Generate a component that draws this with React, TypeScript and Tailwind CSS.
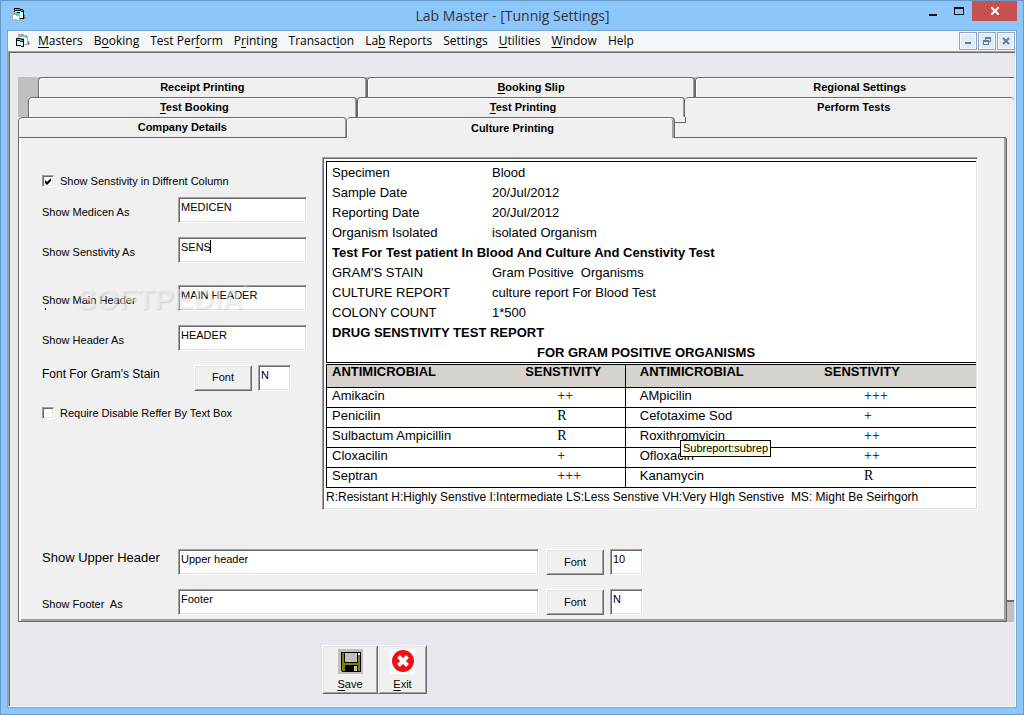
import React, { useState } from 'react';

const SUNKEN = 'border border-t-[#a0a0a0] border-l-[#a0a0a0] border-r-white border-b-white shadow-[inset_1px_1px_0_#696969,inset_-1px_-1px_0_#e3e3e3]';
const RAISED = 'border border-t-white border-l-white border-r-[#696969] border-b-[#696969] shadow-[inset_1px_1px_0_#e3e3e3,inset_-1px_-1px_0_#a0a0a0]';

interface MenuEntry {
    text: string;
    key: number;
}

const menus: MenuEntry[] = [
    { text: 'Masters', key: 0 },
    { text: 'Booking', key: 1 },
    { text: 'Test Perform', key: 8 },
    { text: 'Printing', key: 1 },
    { text: 'Transaction', key: 8 },
    { text: 'Lab Reports', key: 2 },
    { text: 'Settings', key: -1 },
    { text: 'Utilities', key: 0 },
    { text: 'Window', key: 0 },
    { text: 'Help', key: -1 },
];

const reportLines: [string, string][] = [
    ['Specimen', 'Blood'],
    ['Sample Date', '20/Jul/2012'],
    ['Reporting Date', '20/Jul/2012'],
    ['Organism Isolated', 'isolated Organism'],
];

const cultureLines: [string, string][] = [
    ["GRAM'S STAIN", 'Gram Positive  Organisms'],
    ['CULTURE REPORT', 'culture report For Blood Test'],
    ['COLONY COUNT', '1*500'],
];

const drugs = [
    ['Amikacin', '++', 'AMpicilin', '+++'],
    ['Penicilin', 'R', 'Cefotaxime Sod', '+'],
    ['Sulbactum Ampicillin', 'R', 'Roxithromyicin', '++'],
    ['Cloxacilin', '+', 'Ofloxacin', '++'],
    ['Septran', '+++', 'Kanamycin', 'R'],
];

// Label with its access key underlined
const Mnemonic: React.FC<{ text: string; at: number }> = ({ text, at }) => {
    if (at < 0) return <>{text}</>;
    return (
        <span>
            {text.slice(0, at)}
            <span className="underline underline-offset-2">{text[at]}</span>
            {text.slice(at + 1)}
        </span>
    );
};

const FormsIcon: React.FC<{ back: string; front: string }> = ({ back, front }) => (
    <svg width="15" height="14" viewBox="0 0 15 14" shapeRendering="crispEdges" aria-hidden="true">
        <path d="M12 7h1v2h1v1h-1v1h-2v-3h1z" fill="#808080" />
        <path d="M2 0h6v1h3v1h1v9h-4v-6h-6z" fill={back} />
        <path d="M3 1h5v1h3v1h-2v-1h-6z" fill="#00e5e5" />
        <path d="M3 3h6v1h2v6h-3v-6h-5z" fill="#fff" />
        <path d="M0 4h5v1h3v8h-3v-1h-5z" fill={front} />
        <path d="M1 5h4v1h2v1h-3v-1h-3z" fill="#00e5e5" />
        <path d="M1 7h3v1h3v4h-2v-1h-4z" fill="#fff" />
    </svg>
);

interface TabProps {
    text: string;
    at?: number;
    className?: string;
}

const Tab: React.FC<TabProps> = ({ text, at = -1, className = '' }) => (
    <button
        type="button"
        className={`h-5 w-[33%] shrink-0 rounded-t-[4px] border-t border-l border-r border-[#696969] bg-[#f0f0f0] pb-[2px] text-center text-[11px] leading-[16px] font-bold shadow-[inset_1px_1px_0_#fff,inset_-1px_0_0_#a0a0a0] ${className}`}
    >
        <Mnemonic text={text} at={at} />
    </button>
);

interface TextFieldProps {
    id: string;
    value: string;
    onChange: (id: string, value: string) => void;
    label?: string;
    className: string;
}

const TextField: React.FC<TextFieldProps> = ({ id, value, onChange, label, className }) => (
    <input
        id={id}
        type="text"
        aria-label={label}
        value={value}
        onChange={e => onChange(id, e.target.value)}
        className={`h-[26px] shrink-0 bg-white pr-1 pb-[6px] pl-[2px] text-[11px] outline-none ${SUNKEN} ${className}`}
    />
);

const FontButton: React.FC = () => (
    <button type="button" className={`h-[26px] w-[58px] shrink-0 bg-[#f0f0f0] text-[11px] ${RAISED}`}>Font</button>
);

const CheckBox: React.FC<{ label: string; initial: boolean }> = ({ label, initial }) => {
    const [checked, setChecked] = useState(initial);
    return (
        <label className="flex items-center gap-[6px]">
            <span className="grid">
                <input
                    type="checkbox"
                    checked={checked}
                    onChange={() => setChecked(!checked)}
                    className={`col-start-1 row-start-1 h-3 w-3 appearance-none bg-white ${SUNKEN}`}
                />
                {checked && (
                    <svg viewBox="0 0 12 12" className="pointer-events-none col-start-1 row-start-1 h-3 w-3" aria-hidden="true">
                        <path d="M3 5v3l2 2 4-4v-3l-4 4z" fill="#000" />
                    </svg>
                )}
            </span>
            {label}
        </label>
    );
};

const ReportPreview: React.FC = () => (
    <div className={`min-w-0 flex-1 overflow-hidden bg-white py-[3px] pr-px pl-[3px] text-[13px] ${SUNKEN}`}>
        <div className="border-t border-b border-l border-black pt-px pl-[5px] leading-5 whitespace-pre">
            {reportLines.map(([name, value]) => (
                <div key={name} className="flex">
                    <span className="w-40">{name}</span>
                    <span>{value}</span>
                </div>
            ))}
            <p className="font-bold">Test For Test patient In Blood And Culture And Censtivity Test</p>
            {cultureLines.map(([name, value]) => (
                <div key={name} className="flex">
                    <span className="w-40">{name}</span>
                    <span>{value}</span>
                </div>
            ))}
            <p className="font-bold">DRUG SENSTIVITY TEST REPORT</p>
            <p className="pr-4 text-center leading-[19px] font-bold">FOR GRAM POSITIVE ORGANISMS</p>
        </div>
        <div className="relative mt-px">
            <table className="w-full table-fixed border-collapse border-t border-b border-l border-black text-left">
                <thead>
                    <tr className="h-[23px] border-b border-black bg-[#d6d3ce] align-top leading-[14px]">
                        <th className="w-[30%] pl-[5px]">ANTIMICROBIAL</th>
                        <th className="w-[16%] border-r border-black pl-1">SENSTIVITY</th>
                        <th className="w-[30%] pl-[14px]">ANTIMICROBIAL</th>
                        <th className="w-[24%] pl-1">SENSTIVITY</th>
                    </tr>
                </thead>
                <tbody>
                    {drugs.map(([first, firstValue, second, secondValue]) => (
                        <tr key={first} className="h-5 border-b border-black align-top leading-[15px]">
                            <td className="pl-[5px]">{first}</td>
                            <td className="border-r border-black pl-9 font-['Liberation_Serif',serif] text-[14px]">{firstValue}</td>
                            <td className="pl-[14px]">{second}</td>
                            <td className="pl-11 font-['Liberation_Serif',serif] text-[14px]">{secondValue}</td>
                        </tr>
                    ))}
                </tbody>
            </table>
            <div role="tooltip" className="absolute top-[76px] left-[354px] border border-black bg-[#ffffe1] px-[2px] text-[11px] leading-[15px]">
                Subreport:subrep
            </div>
        </div>
        <p className="text-[12px] leading-[18px] whitespace-pre">
            R:Resistant H:Highly Senstive I:Intermediate LS:Less Senstive VH:Very HIgh Senstive  MS: Might Be Seirhgorh
        </p>
    </div>
);

const SaveIcon: React.FC = () => (
    <svg width="25" height="25" viewBox="0 0 25 25" shapeRendering="crispEdges" aria-hidden="true">
        <path d="M0 0h25v25h-25z" fill="#c0c0c0" />
        <path d="M3 3h20v20h-19l-1-1z" fill="#000" />
        <path d="M4 4h18v18h-18z" fill="#808000" />
        <path d="M6 3h14v11h-14z" fill="#000" />
        <path d="M7 4h12v9h-12z" fill="#c0c0c0" />
        <path d="M20 4h2v2h-2z" fill="#fff" />
        <path d="M7 16h13v7h-13z" fill="#000" />
        <path d="M16 17h3v5h-3z" fill="#c0c0c0" />
    </svg>
);

const ExitIcon: React.FC = () => (
    <svg width="25" height="25" viewBox="0 0 25 25" aria-hidden="true">
        <path d="M0 0h25v25h-25z" fill="#fff" />
        <circle cx="13" cy="12" r="11" fill="#f01010" />
        <path d="M8.500 7.500l9 9M17.500 7.500l-9 9" stroke="#fff" strokeWidth="4" />
    </svg>
);

const MDI_BUTTON = 'grid h-[18px] w-[18px] place-items-center border border-[#92a5bf] bg-[#dfecfa] shadow-[inset_0_0_0_1px_#f4f9ff]';

export default function App() {
    const [fields, setFields] = useState<Record<string, string>>({
        medicen: 'MEDICEN',
        sens: 'SENS',
        mainHeader: 'MAIN HEADER',
        header: 'HEADER',
        gramFont: 'N',
        upperHeader: 'Upper header',
        upperFont: '10',
        footer: 'Footer',
        footerFont: 'N',
    });

    const update = (id: string, value: string) => {
        setFields(prev => ({ ...prev, [id]: value }));
    };

    return (
        <div className="flex min-h-screen flex-col border border-[#6699c8] bg-[#8cc6fa] px-[6px] pb-[6px] font-['Liberation_Sans',Arial,sans-serif] text-[11px] text-black">
            <header className="flex h-[29px] items-start">
                <div className="flex flex-1 pt-[7px] pl-[5px]">
                    <FormsIcon back="#000" front="#b0b0b0" />
                </div>
                <h1 className="pt-1 pr-1 font-['Open_Sans',sans-serif] text-[14px] leading-[22px] text-[#333]">Lab Master - [Tunnig Settings]</h1>
                <div className="flex flex-1 justify-end">
                    <button type="button" aria-label="Minimize" className="grid h-5 w-[26px] place-items-center">
                        <svg width="10" height="10" aria-hidden="true"><path d="M1 8h8v2h-8z" fill="#111" /></svg>
                    </button>
                    <button type="button" aria-label="Maximize" className="grid h-5 w-[26px] place-items-center">
                        <svg width="10" height="8" aria-hidden="true"><path d="M0 0h10v8h-10zM1 2v5h8v-5z" fill="#111" fillRule="evenodd" /></svg>
                    </button>
                    <button type="button" aria-label="Close" className="grid h-5 w-[45px] place-items-center bg-[#c75050]">
                        <svg width="8" height="8" aria-hidden="true"><path d="M0 0l8 8M8 0l-8 8" stroke="#fff" strokeWidth="2" /></svg>
                    </button>
                </div>
            </header>

            <div className="flex flex-1 flex-col border border-[#74a7d6]">
                <nav className="flex h-5 items-center bg-[#f5f6f7] pr-[1px] pl-2 font-['Open_Sans',sans-serif] text-[12px]">
                    <FormsIcon back="#b0b0b0" front="#000" />
                    <div className="flex flex-1 gap-[11px] pl-[7px]">
                        {menus.map(menu => (
                            <button key={menu.text} type="button"><Mnemonic text={menu.text} at={menu.key} /></button>
                        ))}
                    </div>
                    <div className="flex gap-px">
                        <button type="button" aria-label="Minimize child" className={MDI_BUTTON}>
                            <svg width="8" height="8" aria-hidden="true"><path d="M1 5h6v2h-6z" fill="#687a90" /></svg>
                        </button>
                        <button type="button" aria-label="Restore child" className={MDI_BUTTON}>
                            <svg width="8" height="8" aria-hidden="true"><path d="M2 0h6v5h-2v-1h1v-2h-4v1h-1zM0 3h6v5h-6zM1 5v2h4v-2z" fill="#687a90" fillRule="evenodd" /></svg>
                        </button>
                        <button type="button" aria-label="Close child" className={MDI_BUTTON}>
                            <svg width="8" height="8" aria-hidden="true"><path d="M1 1l6 6M7 1l-6 6" stroke="#687a90" strokeWidth="2" /></svg>
                        </button>
                    </div>
                </nav>

                <main className={`flex-1 bg-[#e8e9ee] pt-[25px] pr-px pl-[9px] ${SUNKEN}`}>
                    <div className="overflow-hidden bg-[#c0c0c0] pl-5">
                        <div className="-mr-5 flex">
                            <Tab text="Receipt Printing" />
                            <Tab text="Booking Slip" at={0} />
                            <Tab text="Regional Settings" />
                        </div>
                    </div>
                    <div className="overflow-hidden bg-[#c0c0c0] pl-[10px]">
                        <div className="-mr-[10px] flex overflow-hidden bg-[#f0f0f0]">
                            <Tab text="Test Booking" at={0} className="pl-1" />
                            <Tab text="Test Printing" at={0} className="pl-1" />
                            <button
                                type="button"
                                className="h-5 w-[33%] shrink-0 rounded-t-[4px] border-t border-[#696969] bg-[#f0f0f0] pb-[2px] pl-2 text-center text-[11px] leading-[16px] font-bold shadow-[inset_0_1px_0_#fff]"
                            >
                                Perform Tests
                            </button>
                        </div>
                    </div>
                    <div className="flex bg-[#f0f0f0]">
                        <Tab text="Company Details" className="h-[21px] border-b" />
                        <button
                            type="button"
                            className="h-[21px] w-[33%] shrink-0 rounded-t-[4px] border-t border-r border-[#696969] bg-[#f0f0f0] pt-px pl-1 text-center text-[11px] font-bold shadow-[inset_1px_1px_0_#fff,inset_-2px_0_0_#a0a0a0]"
                        >
                            Culture Printing
                        </button>
                        <div className="mr-2 flex-1 border-b border-[#696969]">
                            <div className="h-[6px] w-[11px] border-r border-b border-[#696969]" />
                        </div>
                    </div>

                    <div className="flex">
                        <section className="relative min-w-0 flex-1 border-r border-b border-l border-[#696969] bg-[#f0f0f0] pt-[19px] pr-7 pb-[6px] pl-[23px] shadow-[inset_2px_0_0_#fff,inset_-2px_-2px_0_#a0a0a0]">
                            <div className="flex items-start gap-[14px]">
                                <form className="w-[266px] shrink-0 pt-4">
                                    <CheckBox label="Show Senstivity in Diffrent Column" initial={true} />
                                    <div className="flex h-10 items-center">
                                        <label htmlFor="medicen" className="w-[136px] pt-[6px]">Show Medicen As</label>
                                        <TextField id="medicen" value={fields.medicen} onChange={update} className="w-[129px]" />
                                    </div>
                                    <div className="flex h-10 items-center">
                                        <label htmlFor="sens" className="w-[136px] pt-[6px]">Show Senstivity As</label>
                                        <TextField id="sens" value={fields.sens} onChange={update} className="w-[129px]" />
                                    </div>
                                    <div className="mt-2 flex h-10 items-center">
                                        <label htmlFor="mainHeader" className="w-[136px] pt-[6px]">Show Main Header</label>
                                        <TextField id="mainHeader" value={fields.mainHeader} onChange={update} className="w-[129px]" />
                                    </div>
                                    <div className="flex h-10 items-center">
                                        <label htmlFor="header" className="w-[136px] pt-[6px]">Show Header As</label>
                                        <TextField id="header" value={fields.header} onChange={update} className="w-[129px]" />
                                    </div>
                                    <div className="flex h-10 items-center">
                                        <label htmlFor="gramFont" className="w-[152px] pb-2 text-[12px]">Font For Gram's Stain</label>
                                        <FontButton />
                                        <TextField id="gramFont" value={fields.gramFont} onChange={update} className="ml-[6px] w-[33px]" />
                                    </div>
                                    <div className="pt-[7px]">
                                        <CheckBox label="Require Disable Reffer By Text Box" initial={false} />
                                    </div>
                                </form>
                                <ReportPreview />
                            </div>

                            <div className="mt-[39px] flex flex-col gap-[14px]">
                                <div className="flex h-[26px] items-center">
                                    <label htmlFor="upperHeader" className="w-[136px] pb-2 text-[13px] leading-4">Show Upper Header</label>
                                    <TextField id="upperHeader" value={fields.upperHeader} onChange={update} className="w-[361px]" />
                                    <span className="w-[7px]" />
                                    <FontButton />
                                    <TextField id="upperFont" label="Upper header font" value={fields.upperFont} onChange={update} className="ml-[6px] w-[33px]" />
                                </div>
                                <div className="flex h-[26px] items-center">
                                    <label htmlFor="footer" className="w-[136px] pt-1 whitespace-pre">Show Footer  As</label>
                                    <TextField id="footer" value={fields.footer} onChange={update} className="w-[361px]" />
                                    <span className="w-[7px]" />
                                    <FontButton />
                                    <TextField id="footerFont" label="Footer font" value={fields.footerFont} onChange={update} className="ml-[6px] w-[33px]" />
                                </div>
                            </div>

                            <div className="pointer-events-none absolute top-[143px] left-[58px] flex items-start text-[29px] leading-[36px] font-bold text-white/50 [text-shadow:1px_1px_2px_#00000022]" aria-hidden="true">
                                SOFTPEDIA<span className="text-[8px] leading-[12px]">®</span>
                            </div>
                            <span className="pointer-events-none absolute top-[102px] left-[191px] h-[13px] w-px bg-black" />
                            {/* clipped second line of the "Show Main Header" caption */}
                            <span className="pointer-events-none absolute top-[170px] left-[26px] h-[2px] w-px bg-black" />
                        </section>
                        <div className="flex w-[7px] flex-col bg-[#c0c0c0]">
                            <div className="flex-1 border-b-2 border-[#696969] bg-[#f0f0f0]" />
                            <div className="h-5" />
                        </div>
                    </div>

                    <div className="mt-[23px] flex pl-[304px]">
                        <button type="button" className={`flex h-[49px] w-14 flex-col items-center gap-[2px] bg-[#f0f0f0] pt-[3px] text-[11px] ${RAISED}`}>
                            <SaveIcon />
                            <Mnemonic text="Save" at={0} />
                        </button>
                        <button type="button" className={`flex h-[49px] w-[49px] flex-col items-center gap-[2px] bg-[#f0f0f0] pt-[3px] text-[11px] ${RAISED}`}>
                            <ExitIcon />
                            <Mnemonic text="Exit" at={0} />
                        </button>
                    </div>
                </main>
            </div>
        </div>
    );
}
